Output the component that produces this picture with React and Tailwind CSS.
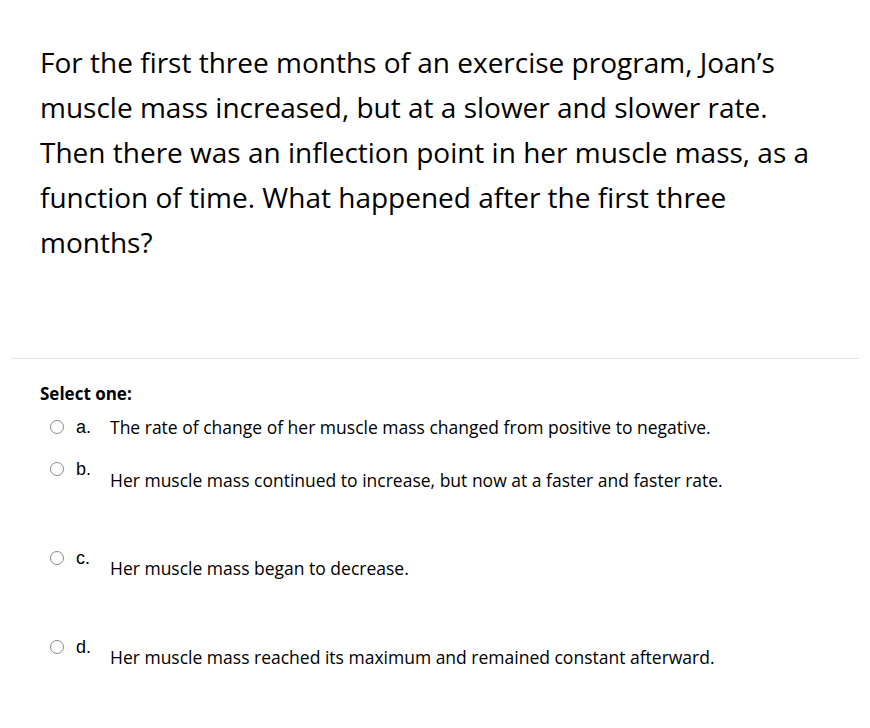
export default function App() {
  const opts = [
    { l: "a.", t: "The rate of change of her muscle mass changed from positive to negative.", row: "mt-[11px]", off: "pt-0", },
    { l: "b.", t: "Her muscle mass continued to increase, but now at a faster and faster rate.", row: "mt-[20px]", off: "pt-[11px]" },
    { l: "c.", t: "Her muscle mass began to decrease.", row: "mt-[56px]", off: "pt-[10px]" },
    { l: "d.", t: "Her muscle mass reached its maximum and remained constant afterward.", row: "mt-[57px]", off: "pt-[10px]" },
  ];
  return (
    <div className="w-[870px] h-[728px] bg-white overflow-hidden">
      <div className="px-[40px] pt-[40px] h-[320px] text-[28px] leading-[45px] text-black" style={{ fontFamily: '"Open Sans", sans-serif' }}>
        For the first three months of an exercise program, Joan’s muscle mass increased, but at a slower and slower rate. Then there was an inflection point in her muscle mass, as a function of time. What happened after the first three months?
      </div>
      <div className="mx-[11px] mt-[38px] border-t border-[#e6e6e6]"></div>
      <div className="px-[40px] pt-[24px]">
        <div className="text-[17px] font-bold leading-[22px]" style={{ fontFamily: '"Open Sans", sans-serif' }}>Select one:</div>
        {opts.map((o) => (
          <div key={o.l} className={`flex items-start ${o.row}`}>
            <div className="w-[14px] h-[14px] mt-[4px] ml-[10px] rounded-full border-[1.5px] border-[#8a8a8a] shrink-0"></div>
            <div className="ml-[12px] w-[34px] text-[18px] leading-[22px]" style={{ fontFamily: '"Liberation Sans", Arial, sans-serif' }}>{o.l}</div>
            <div className={`${o.off} text-[17.5px] leading-[22px]`} style={{ fontFamily: '"Open Sans", sans-serif' }}>{o.t}</div>
          </div>
        ))}
      </div>
    </div>
  );
}
